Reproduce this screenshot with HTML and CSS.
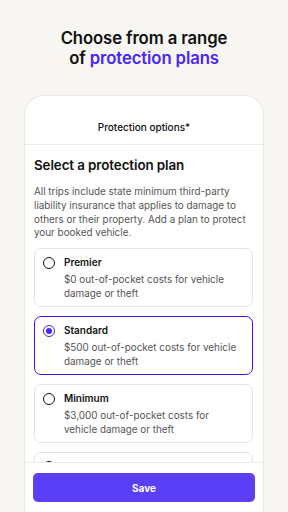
FILE: index.html
```html
<!DOCTYPE html>
<html lang="en">
<head>
<meta charset="utf-8">
<title>Protection plans</title>
<link rel="stylesheet" href="styles.css">
</head>
<body>
<main class="screen">
  <h1 class="hero">Choose from a range<br>of <span class="accent">protection plans</span></h1>
  <section class="device">
    <header class="device-header">Protection options*</header>
    <div class="scroll">
      <h2 class="title">Select a protection plan</h2>
      <p class="intro">All trips include state minimum third-party liability insurance that applies to damage to others or their property. Add a plan to protect your booked vehicle.</p>
      <div class="options">
        <div class="option">
          <span class="radio"></span>
          <div class="option-text">
            <div class="option-name">Premier</div>
            <div class="option-desc">$0 out-of-pocket costs for vehicle damage or theft</div>
          </div>
        </div>
        <div class="option selected">
          <span class="radio"></span>
          <div class="option-text">
            <div class="option-name">Standard</div>
            <div class="option-desc">$500 out-of-pocket costs for vehicle damage or theft</div>
          </div>
        </div>
        <div class="option">
          <span class="radio"></span>
          <div class="option-text">
            <div class="option-name">Minimum</div>
            <div class="option-desc">$3,000 out-of-pocket costs for vehicle damage or theft</div>
          </div>
        </div>
        <div class="option">
          <span class="radio"></span>
          <div class="option-text">
            <div class="option-name">Decline protection</div>
          </div>
        </div>
      </div>
    </div>
    <footer class="device-footer">
      <button class="save">Save</button>
    </footer>
  </section>
</main>
</body>
</html>
```

FILE: styles.css
```css
* { box-sizing: border-box; }
html, body { margin: 0; padding: 0; }
body {
  width: 288px;
  height: 512px;
  overflow: hidden;
  background: #f7f6f2;
  font-family: Inter, "Noto Sans", sans-serif;
  color: #111;
}
.screen {
  height: 512px;
  display: flex;
  flex-direction: column;
}
.hero {
  margin: 29px 0 0;
  text-align: center;
  font-size: 16.7px;
  line-height: 19.5px;
  font-weight: 600;
  letter-spacing: -0.1px;
  color: #111;
}
.accent { color: #4a26fb; }
.device {
  flex: 1;
  min-height: 0;
  margin: 27px 24px 0;
  background: #fff;
  border: 1px solid #ebe8e3;
  border-bottom: none;
  border-radius: 20px 20px 0 0;
  display: flex;
  flex-direction: column;
  overflow: hidden;
}
.device-header {
  padding: 24px 0 10px;
  text-align: center;
  font-size: 10px;
  line-height: 14px;
  font-weight: 500;
  border-bottom: 1px solid #eeece8;
}
.scroll {
  flex: 1;
  min-height: 0;
  overflow: hidden;
  padding: 11px 10px 0 9px;
}
.title {
  margin: 0;
  font-size: 13.4px;
  line-height: 18px;
  font-weight: 600;
  letter-spacing: -0.1px;
}
.intro {
  margin: 11px 0 0;
  font-size: 9.9px;
  line-height: 13.8px;
  color: #555;
}
.options {
  margin-top: 8px;
  display: flex;
  flex-direction: column;
  gap: 9px;
}
.option {
  display: flex;
  gap: 9px;
  padding: 7px 8px 6px 8px;
  border: 1px solid #e6e4e0;
  border-radius: 7px;
  background: #fff;
}
.option.selected { border-color: #3517ee; }
.radio {
  flex: none;
  width: 12px;
  height: 12px;
  margin-top: 1px;
  border: 1.4px solid #111;
  border-radius: 50%;
  display: flex;
  align-items: center;
  justify-content: center;
}
.selected .radio { border-color: #4a26fb; }
.selected .radio::after {
  content: "";
  width: 6px;
  height: 6px;
  border-radius: 50%;
  background: #4a26fb;
}
.option-name {
  font-size: 10px;
  line-height: 13px;
  font-weight: 600;
  margin-bottom: 3px;
}
.option-desc {
  font-size: 9.9px;
  line-height: 14px;
  color: #555;
}
.device-footer {
  flex: none;
  padding: 10px 8px 10px;
  border-top: 1px solid #eeece8;
  background: #fff;
}
.save {
  display: block;
  width: 100%;
  height: 29px;
  border: none;
  border-radius: 5px;
  background: #5a3ff6;
  color: #fff;
  font-family: Inter, "Noto Sans", sans-serif;
  font-size: 10px;
  font-weight: 700;
}
```
